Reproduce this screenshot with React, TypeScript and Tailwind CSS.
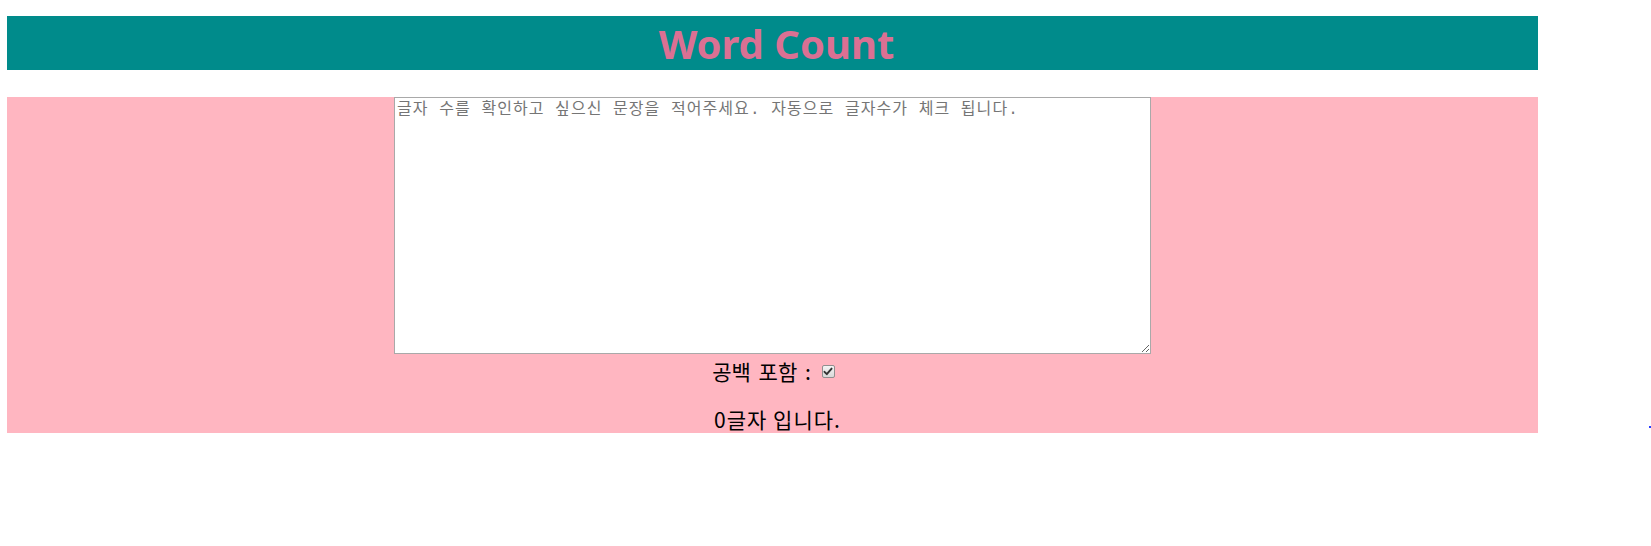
import React from "react";

export default function App() {
  return (
    <div className="relative w-[1651px] h-[546px] bg-white">
      <div className="ml-[7px] w-[1531px] pt-[16px]">
        <header className="h-[54px] bg-[#008b8b] flex items-center justify-center">
          <h1
            className="text-[40px] font-bold text-[#db7093] leading-[54px] pl-[8px] pt-[2px]"
            style={{ fontFamily: '"Noto Sans", "Noto Sans CJK KR", sans-serif' }}
          >
            Word Count
          </h1>
        </header>
        <main
          className="mt-[27px] h-[336px] bg-[#ffb6c1] flex flex-col items-center"
          style={{ fontFamily: '"Noto Sans CJK KR", "Noto Sans", sans-serif' }}
        >
          <textarea
            className="block shrink-0 w-[757px] h-[257px] border border-[#a9a9a9] bg-white px-[2px] py-[3px] text-[16px] leading-[19px] tracking-[1.05px] text-black placeholder:text-[#757575] resize-y outline-none"
            style={{ fontFamily: '"Liberation Mono", "Noto Sans CJK KR", monospace' }}
            placeholder="글자 수를 확인하고 싶으신 문장을 적어주세요. 자동으로 글자수가 체크 됩니다."
          />
          <div className="shrink-0 mt-[1px] flex items-center h-[32px] text-[21px] text-black leading-[32px] [word-spacing:3px] pl-[2px]">
            <span>공백 포함 :</span>
            <span className="ml-[11px] w-[13px] h-[13px] rounded-[2px] border border-[#8f8f8f] bg-gradient-to-b from-[#f4f4f4] to-[#d8d8d8] flex items-center justify-center">
              <svg width="10" height="9" viewBox="0 0 10 9">
                <path d="M1.5 4.8 L3.8 7.2 L8.6 1.6" stroke="#333" strokeWidth="1.9" fill="none" strokeLinecap="round" strokeLinejoin="round" />
              </svg>
            </span>
          </div>
          <p className="shrink-0 mt-[17px] pl-[10px] text-[21px] leading-[30px] text-black tracking-[1px]">0글자 입니다.</p>
        </main>
      </div>
      <span className="absolute left-[1649px] top-[426px] w-[2px] h-[2px] bg-[#2a3cff]" />
    </div>
  );
}
